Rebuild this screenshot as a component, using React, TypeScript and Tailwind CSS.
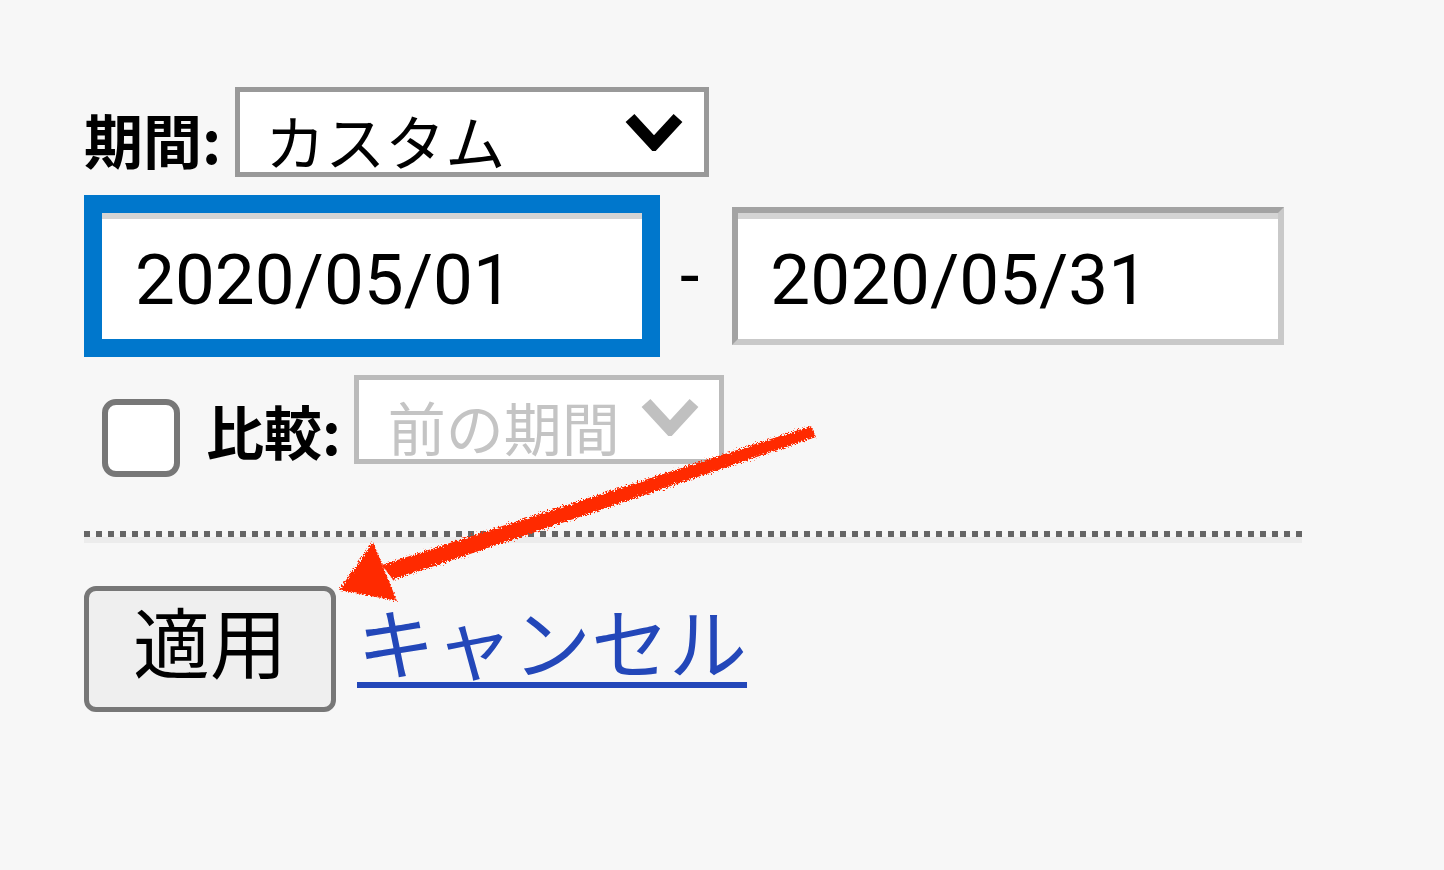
const jp = "font-['Noto_Sans_CJK_JP','Noto_Sans',sans-serif]";
const num = "font-['Roboto','Noto_Sans_CJK_JP',sans-serif]";

function Chevron({ color }: { color: string }) {
  return (
    <svg width="58" height="38" viewBox="0 0 58 38" className="shrink-0">
      <path d="M5 5 L29 31 L53 5" fill="none" stroke={color} strokeWidth="12" strokeLinejoin="miter" />
    </svg>
  );
}

function RedArrow() {
  return (
    <svg className="absolute inset-0 pointer-events-none" width="1444" height="870">
      <defs>
        <filter id="rough" x="-10%" y="-10%" width="120%" height="120%">
          <feTurbulence type="fractalNoise" baseFrequency="0.7" numOctaves="2" seed="3" />
          <feDisplacementMap in="SourceGraphic" scale="6" />
        </filter>
      </defs>
      <g filter="url(#rough)" fill="#ff2a00">
        <polygon points="811,426 816,437 393,580 382,565" />
        <polygon points="339,590 373,542 397,601" />
      </g>
    </svg>
  );
}

export default function App() {
  return (
    <div className={`relative min-h-screen bg-[#f7f7f7] pl-[84px] pt-[87px] ${jp}`}>
      {/* 期間 */}
      <div className="flex items-center">
        <span className="mt-[12px] text-[59px] font-bold leading-none text-black">期間:</span>
        <div className="ml-[14px] flex h-[90px] w-[474px] items-start justify-between border-[5px] border-[#999] bg-white pl-[25px] pr-[21px]">
          <span className="mt-[18px] text-[60px] leading-none text-black">カスタム</span>
          <div className="mt-[21px]">
            <Chevron color="#000" />
          </div>
        </div>
      </div>

      {/* 日付 */}
      <div className="mt-[18px] flex items-center">
        <div className="h-[162px] w-[576px] border-[18px] border-[#0077cc] bg-white">
          <div className="flex h-full items-center border-t-[6px] border-[#d4d4d4] pl-[33px]">
            <span className={`${num} text-[71px] leading-none text-black`}>2020/05/01</span>
          </div>
        </div>
        <span className={`${num} ml-[20px] mr-[33px] text-[70px] leading-none text-black`}>-</span>
        <div className="h-[138px] w-[552px] border-[6px] border-t-[#a3a3a3] border-l-[#a3a3a3] border-r-[#c9c9c9] border-b-[#c9c9c9] bg-white">
          <div className="flex h-full items-center border-t-[6px] border-[#d4d4d4] pl-[32px]">
            <span className={`${num} text-[71px] leading-none text-black`}>2020/05/31</span>
          </div>
        </div>
      </div>

      {/* 比較 */}
      <div className="mt-[18px] flex items-start">
        <div className="ml-[18px] mt-[24px] h-[78px] w-[78px] rounded-[14px] border-[6px] border-[#777] bg-white" />
        <span className="ml-[26px] mt-[26px] text-[58px] font-bold leading-none text-black">比較:</span>
        <div className="ml-[13px] flex h-[89px] w-[370px] items-start justify-between border-[5px] border-[#bbb] bg-white pl-[29px] pr-[20px]">
          <span className="mt-[17px] text-[58px] leading-none text-[#c4c4c4]">前の期間</span>
          <div className="mt-[18px]">
            <Chevron color="#c0c0c0" />
          </div>
        </div>
      </div>

      {/* 区切り */}
      <div className="mt-[54px] w-[1218px]">
        <div className="h-[6px] bg-[repeating-linear-gradient(90deg,#666_0_6px,transparent_6px_12px)]" />
        <div className="h-[6px] bg-[#ececec]" />
      </div>

      {/* ボタン */}
      <div className="mt-[43px] flex items-center">
        <button className="flex h-[126px] w-[252px] items-center justify-center rounded-[12px] border-[5px] border-[#777] bg-[#efefef] pb-[20px] text-[77px] leading-none text-black">
          適用
        </button>
        <a
          href="#"
          className="ml-[21px] -mt-[18px] text-[78px] leading-none text-[#2347b9] underline decoration-[6px] underline-offset-[8px]"
        >
          キャンセル
        </a>
      </div>

      <RedArrow />
    </div>
  );
}
